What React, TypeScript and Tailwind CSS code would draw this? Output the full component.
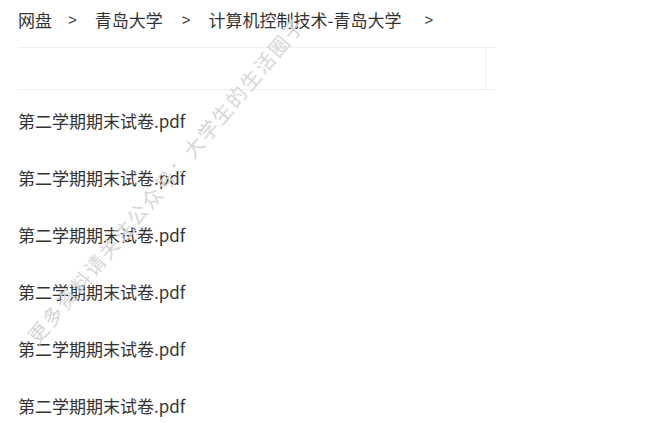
import React from "react";

const files = Array.from({ length: 6 }, () => "第二学期期末试卷.pdf");

export default function App() {
  return (
    <div
      className="relative w-[666px] h-[423px] bg-white overflow-hidden text-[#333333]"
      style={{ fontFamily: '"Noto Sans CJK SC", "Noto Sans", sans-serif' }}
    >
      <div className="pl-[18px] w-[496px]">
        <div className="flex items-center h-[38px] text-[17px] leading-none">
          <span>网盘</span>
          <span className="ml-[16px] mr-[18px] text-[15px]" style={{ fontFamily: '"Liberation Sans", sans-serif' }}>&gt;</span>
          <span>青岛大学</span>
          <span className="ml-[19px] mr-[18px] text-[15px]" style={{ fontFamily: '"Liberation Sans", sans-serif' }}>&gt;</span>
          <span>计算机控制技术-青岛大学</span>
          <span className="ml-[23px] text-[15px]" style={{ fontFamily: '"Liberation Sans", sans-serif' }}>&gt;</span>
        </div>
        <div className="mt-[9px] flex h-[43px] border-t border-b border-[#eeeeee]">
          <div className="flex-1 border-r border-[#eeeeee]" />
          <div className="w-[10px]" />
        </div>
        <div className="pt-[2px]">
          {files.map((f, i) => (
            <div key={i} className="h-[57px] flex items-center text-[17px] leading-none">
              {f}
            </div>
          ))}
        </div>
      </div>
      <div className="pointer-events-none absolute left-[166px] top-[180px] -translate-x-1/2 -translate-y-1/2 -rotate-[50deg] whitespace-nowrap text-[20px] tracking-[2px] text-[#d6d6d6]">
        更多资料请关注公众号：大学生的生活圈子
      </div>
    </div>
  );
}
